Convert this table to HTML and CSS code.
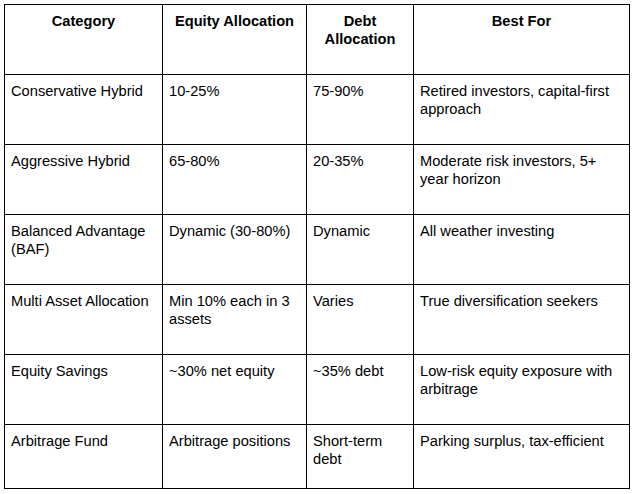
FILE: index.html
```html
<!DOCTYPE html>
<html lang="en">
<head>
<meta charset="utf-8">
<title>Hybrid Fund Categories</title>
<link rel="stylesheet" href="styles.css">
</head>
<body>
<table class="fund-table">
  <colgroup>
    <col class="c1"><col class="c2"><col class="c3"><col class="c4">
  </colgroup>
  <thead>
    <tr class="row">
      <th>Category</th>
      <th>Equity Allocation</th>
      <th>Debt Allocation</th>
      <th>Best For</th>
    </tr>
  </thead>
  <tbody>
    <tr class="row">
      <td>Conservative Hybrid</td>
      <td>10-25%</td>
      <td>75-90%</td>
      <td>Retired investors, capital-first approach</td>
    </tr>
    <tr class="row">
      <td>Aggressive Hybrid</td>
      <td>65-80%</td>
      <td>20-35%</td>
      <td>Moderate risk investors, 5+ year horizon</td>
    </tr>
    <tr class="row">
      <td>Balanced Advantage (BAF)</td>
      <td>Dynamic (30-80%)</td>
      <td>Dynamic</td>
      <td>All weather investing</td>
    </tr>
    <tr class="row">
      <td>Multi Asset Allocation</td>
      <td>Min 10% each in 3 assets</td>
      <td>Varies</td>
      <td>True diversification seekers</td>
    </tr>
    <tr class="row">
      <td>Equity Savings</td>
      <td>~30% net equity</td>
      <td>~35% debt</td>
      <td>Low-risk equity exposure with arbitrage</td>
    </tr>
    <tr class="row last">
      <td>Arbitrage Fund</td>
      <td>Arbitrage positions</td>
      <td>Short-term debt</td>
      <td>Parking surplus, tax-efficient</td>
    </tr>
  </tbody>
</table>
</body>
</html>
```

FILE: styles.css
```css
html, body {
  margin: 0;
  padding: 0;
  background: #ffffff;
}

body {
  padding: 4px 0 0 4px;
  font-family: "Liberation Sans", Arial, sans-serif;
  font-size: 14.667px;
  line-height: 18px;
  color: #000000;
}

.fund-table {
  border-collapse: collapse;
  table-layout: fixed;
  width: 625px;
}

.c1 { width: 158px; }
.c2 { width: 144px; }
.c3 { width: 107px; }
.c4 { width: 216px; }

.fund-table th,
.fund-table td {
  border: 1px solid #000000;
  padding: 7px 6px 6px;
  vertical-align: top;
  text-align: left;
  font-weight: normal;
}

.fund-table th {
  font-weight: bold;
  text-align: center;
}

.row { height: 70px; }
.row.last { height: 64px; }
```
